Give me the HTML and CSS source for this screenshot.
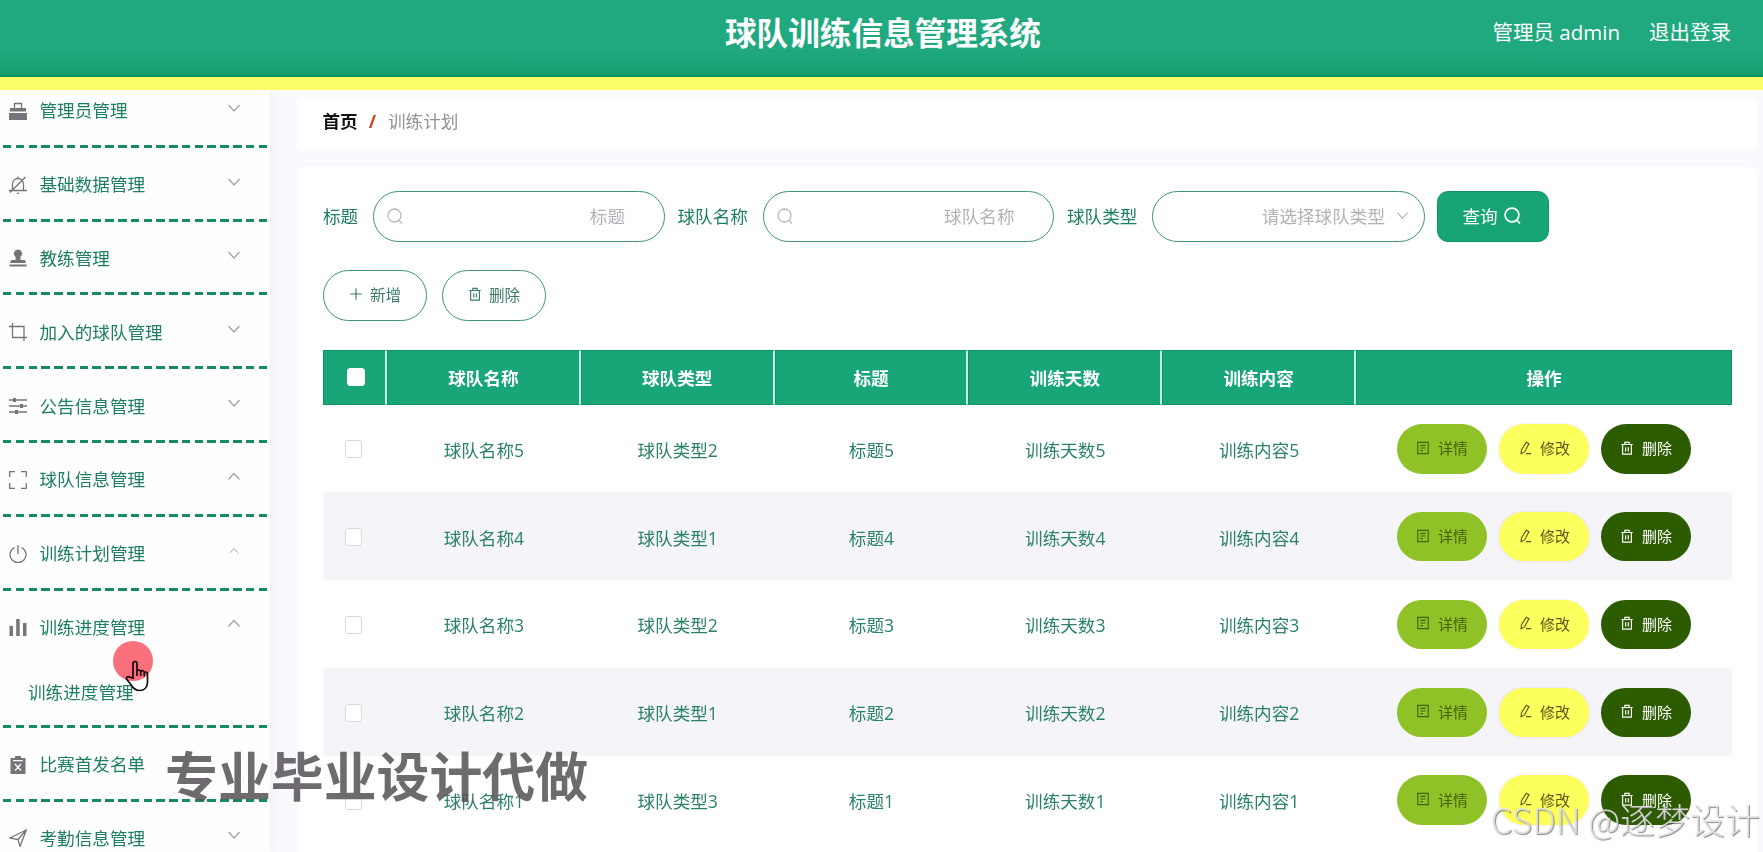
FILE: index.html
```html
<!DOCTYPE html>
<html lang="zh-CN">

<head>
  <meta charset="utf-8">
  <title>球队训练信息管理系统</title>
  <link rel="stylesheet" href="styles.css">
</head>

<body>
  <!-- icons -->
  <svg class="sprite">
    <symbol id="i-down" viewBox="0 0 14 14"><path d="M1.5 4l5.5 6 5.5-6" /></symbol>
    <symbol id="i-up" viewBox="0 0 14 14"><path d="M1.5 9.500l5.500-6 5.500 6" /></symbol>
    <symbol id="i-search" viewBox="0 0 16 16"><circle cx="7.500" cy="7.500" r="6.500" /><path d="M11.500 12l3.500 3.500" /></symbol>
    <symbol id="i-plus" viewBox="0 0 16 16"><path d="M8 1.500v13M1.500 8h13" /></symbol>
    <symbol id="i-trash" viewBox="0 0 16 16"><path d="M1.500 4h13M3 4v11h10V4M5.500 4V1.500h5V4M6.500 7v5M9.500 7v5" /></symbol>
    <symbol id="i-doc" viewBox="0 0 16 16"><path d="M2 1.500h12v13H2zM5 5h6M5 8h6M5 11h3" /></symbol>
    <symbol id="i-edit" viewBox="0 0 16 16"><path d="M9.500 1.500l3 1.500-5 9.500-4 2 .5-4.500zM9 14.500h6" /></symbol>
  </svg>

  <header class="header">
    <h1>球队训练信息管理系统</h1>
    <div class="user">
      <span>管理员 admin</span>
      <a>退出登录</a>
    </div>
  </header>

  <div class="container">
    <aside class="sidebar">
      <ul class="menu">
        <li>
          <div class="menu-title">
            <svg class="icon" viewBox="0 0 18 18"><path class="fill" d="M0 11h18v7H0zM1 6h16v3.500H1z" /><path d="M5.500 6V1.500h7V6" /></svg>
            <span>管理员管理</span><svg class="arrow"><use href="#i-down" /></svg>
          </div>
        </li>
        <li>
          <div class="menu-title">
            <svg class="icon" viewBox="0 0 18 18"><path d="M3.500 14.500V8a5.500 5.500 0 0 1 11 0v6.500M0 14.500h18M9 .5v2M8 17.500h2M1 16.500L16.500 1" /></svg>
            <span>基础数据管理</span><svg class="arrow"><use href="#i-down" /></svg>
          </div>
        </li>
        <li>
          <div class="menu-title">
            <svg class="icon" viewBox="0 0 18 18"><path class="fill" d="M9 .5a4 4 0 0 1 2.500 7.200V11H16l1 3H1l1-3h4.500V7.700A4 4 0 0 1 9 .5zM.5 15.500h17V17.500H.5z" /></svg>
            <span>教练管理</span><svg class="arrow"><use href="#i-down" /></svg>
          </div>
        </li>
        <li>
          <div class="menu-title">
            <svg class="icon" viewBox="0 0 18 18"><path d="M0 3.500h15V18M3.500 0v14.500H18" /></svg>
            <span>加入的球队管理</span><svg class="arrow"><use href="#i-down" /></svg>
          </div>
        </li>
        <li>
          <div class="menu-title">
            <svg class="icon" viewBox="0 0 18 18"><path d="M0 3h18M0 9h18M0 15h18" /><path class="fill" d="M4 1h3v4H4zM11 7h3v4h-3zM6 13h3v4H6z" /></svg>
            <span>公告信息管理</span><svg class="arrow"><use href="#i-down" /></svg>
          </div>
        </li>
        <li>
          <div class="menu-title">
            <svg class="icon" viewBox="0 0 18 18"><path d="M.7 6V.7H6M12 .7h5.300V6M17.300 12v5.300H12M6 17.300H.7V12" /></svg>
            <span>球队信息管理</span><svg class="arrow"><use href="#i-up" /></svg>
          </div>
        </li>
        <li>
          <div class="menu-title">
            <svg class="icon" viewBox="0 0 18 18"><path d="M5.500 2.500a8 8 0 1 0 7 0M9 0v9" /></svg>
            <span>训练计划管理</span><svg class="arrow small"><use href="#i-up" /></svg>
          </div>
        </li>
        <li>
          <div class="menu-title">
            <svg class="icon" viewBox="0 0 18 18"><path class="fill" d="M.5 8H4v10H.5zM7.200 1h3.500v17H7.200zM14 5h3.500v13H14z" /></svg>
            <span>训练进度管理</span><svg class="arrow"><use href="#i-up" /></svg>
          </div>
          <div class="submenu">训练进度管理</div>
        </li>
        <li>
          <div class="menu-title">
            <svg class="icon" viewBox="0 0 18 18"><path class="fill" d="M1.500 2h15v16h-15zM6 0h6v3H6z" /><path class="white" d="M4 4.700h10M6 8l6 6.500M12 8l-6 6.500" /></svg>
            <span>比赛首发名单</span>
          </div>
        </li>
        <li>
          <div class="menu-title">
            <svg class="icon" viewBox="0 0 18 18"><path d="M17.300 1L.8 9l8.200 1.500 2 7z M17.300 1L9 10.500" /></svg>
            <span>考勤信息管理</span><svg class="arrow"><use href="#i-down" /></svg>
          </div>
        </li>
      </ul>
    </aside>

    <main class="main">
      <div class="breadcrumb"><b>首页</b><i>/</i><span>训练计划</span></div>

      <div class="content">
        <form class="search">
          <label for="title">标题</label>
          <div class="field">
            <svg><use href="#i-search" /></svg>
            <input type="text" id="title" placeholder="标题">
          </div>
          <label for="team">球队名称</label>
          <div class="field">
            <svg><use href="#i-search" /></svg>
            <input type="text" id="team" placeholder="球队名称">
          </div>
          <label for="type">球队类型</label>
          <div class="field select">
            <input type="text" id="type" placeholder="请选择球队类型" readonly>
            <svg><use href="#i-down" /></svg>
          </div>
          <button type="button" class="query">查询<svg><use href="#i-search" /></svg></button>
        </form>

        <div class="actions">
          <button type="button"><svg><use href="#i-plus" /></svg>新增</button>
          <button type="button"><svg><use href="#i-trash" /></svg>删除</button>
        </div>

        <table>
          <colgroup>
            <col class="c-check"><col><col><col><col><col><col class="c-oper">
          </colgroup>
          <thead>
            <tr>
              <th><input type="checkbox"></th>
              <th>球队名称</th>
              <th>球队类型</th>
              <th>标题</th>
              <th>训练天数</th>
              <th>训练内容</th>
              <th>操作</th>
            </tr>
          </thead>
          <tbody>
            <tr>
              <td><input type="checkbox"></td>
              <td>球队名称5</td><td>球队类型2</td><td>标题5</td><td>训练天数5</td><td>训练内容5</td>
              <td>
                <div class="oper">
                  <button class="detail"><svg><use href="#i-doc" /></svg>详情</button>
                  <button class="edit"><svg><use href="#i-edit" /></svg>修改</button>
                  <button class="del"><svg><use href="#i-trash" /></svg>删除</button>
                </div>
              </td>
            </tr>
            <tr>
              <td><input type="checkbox"></td>
              <td>球队名称4</td><td>球队类型1</td><td>标题4</td><td>训练天数4</td><td>训练内容4</td>
              <td>
                <div class="oper">
                  <button class="detail"><svg><use href="#i-doc" /></svg>详情</button>
                  <button class="edit"><svg><use href="#i-edit" /></svg>修改</button>
                  <button class="del"><svg><use href="#i-trash" /></svg>删除</button>
                </div>
              </td>
            </tr>
            <tr>
              <td><input type="checkbox"></td>
              <td>球队名称3</td><td>球队类型2</td><td>标题3</td><td>训练天数3</td><td>训练内容3</td>
              <td>
                <div class="oper">
                  <button class="detail"><svg><use href="#i-doc" /></svg>详情</button>
                  <button class="edit"><svg><use href="#i-edit" /></svg>修改</button>
                  <button class="del"><svg><use href="#i-trash" /></svg>删除</button>
                </div>
              </td>
            </tr>
            <tr>
              <td><input type="checkbox"></td>
              <td>球队名称2</td><td>球队类型1</td><td>标题2</td><td>训练天数2</td><td>训练内容2</td>
              <td>
                <div class="oper">
                  <button class="detail"><svg><use href="#i-doc" /></svg>详情</button>
                  <button class="edit"><svg><use href="#i-edit" /></svg>修改</button>
                  <button class="del"><svg><use href="#i-trash" /></svg>删除</button>
                </div>
              </td>
            </tr>
            <tr>
              <td><input type="checkbox"></td>
              <td>球队名称1</td><td>球队类型3</td><td>标题1</td><td>训练天数1</td><td>训练内容1</td>
              <td>
                <div class="oper">
                  <button class="detail"><svg><use href="#i-doc" /></svg>详情</button>
                  <button class="edit"><svg><use href="#i-edit" /></svg>修改</button>
                  <button class="del"><svg><use href="#i-trash" /></svg>删除</button>
                </div>
              </td>
            </tr>
          </tbody>
        </table>
      </div>
    </main>
  </div>

  <!-- overlays -->
  <svg class="hand" viewBox="0 0 24 32">
    <path class="palm" d="M8 18V3.500a2 2 0 0 1 4 0V11a2 2 0 0 1 3.700.5 2 2 0 0 1 3.600 1 2 2 0 0 1 3.200 1.500v8c0 5-3 8.500-8 8.500-5 0-7-3-9-6.500L1.500 19c-.5-2 1.500-3 3-2z" />
    <path d="M12 11v5M15.700 12v4M19.300 13v3.500" />
  </svg>
  <div class="click-dot"></div>
  <div class="mark">专业毕业设计代做</div>
  <div class="csdn">CSDN @逐梦设计</div>
</body>

</html>
```
FILE: styles.css
```css
* {
  box-sizing: border-box;
}

body {
  margin: 0;
  height: 852px;
  overflow: hidden;
  position: relative;
  font-family: "Open Sans", "Noto Sans CJK SC", sans-serif;
  font-size: 17.6px;
  color: #1c7f5f;
  background: #faf9fd;
}

svg {
  fill: none;
  stroke: currentColor;
  stroke-width: 1.3;
  flex: none;
}

.sprite {
  display: none;
}

button,
input {
  font-family: inherit;
}

/* header */
.header {
  position: relative;
  z-index: 2;
  height: 90px;
  padding-bottom: 11px;
  display: flex;
  align-items: center;
  justify-content: center;
  color: #fff;
  background: linear-gradient(#20a97f 0, #20a97f 50px, #159e70 74px, #0c8c58 77px);
  border-bottom: 13px solid #fdff68;
}

.header h1 {
  margin: 0 0 0 3px;
  font-size: 31.6px;
  line-height: 40px;
}

.user {
  position: absolute;
  right: 32px;
  top: 17px;
  display: flex;
  gap: 29px;
  font-size: 20.5px;
  line-height: 30px;
}

.container {
  display: flex;
}

/* sidebar */
.sidebar {
  width: 270px;
  height: 762px;
  background: #fefefe;
  box-shadow: 0 0 12px rgba(60, 40, 120, 0.05);
}

.menu {
  list-style: none;
  margin: -16px 0 0;
  padding: 0 3px;
}

.menu li {
  padding-bottom: 3px;
  background: repeating-linear-gradient(90deg, #178a62 0, #178a62 8.500px, transparent 8.500px, transparent 12.780px) left bottom / 100% 3px no-repeat;
}

.menu-title {
  display: flex;
  align-items: center;
  height: 70.8px;
  padding: 1px 26px 0 6px;
}

.menu-title span {
  flex: 1;
  margin-left: 12.5px;
}

.icon {
  width: 18px;
  height: 18px;
  margin-top: 2px;
  color: #77737a;
}

.icon .fill {
  fill: currentColor;
  stroke: none;
}

.icon .white {
  stroke: #fff;
}

.arrow {
  width: 14px;
  height: 14px;
  margin-bottom: 4px;
  color: #a3a0a6;
}

.arrow.small {
  width: 10px;
  margin-right: 2px;
}

.submenu {
  height: 63.4px;
  padding-left: 25px;
  line-height: 62px;
}

/* main */
.main {
  flex: 1;
  padding: 8px 6px 0 28px;
}

.breadcrumb {
  display: flex;
  align-items: center;
  height: 52px;
  padding: 0 25px 7px 24.5px;
  background: #fff;
  border-radius: 4px;
}

.breadcrumb b {
  color: #111;
}

.breadcrumb i {
  margin: 0 12px 0 11px;
  font-weight: bold;
  font-style: normal;
  color: #c8401c;
}

.breadcrumb span {
  color: #929098;
}

.content {
  height: 700px;
  margin-top: 17px;
  padding: 24px 25px 0;
  background: #fff;
  border-radius: 6px;
}

.search {
  display: flex;
  align-items: center;
}

.search label {
  width: 35px;
  margin-right: 15px;
  padding-bottom: 2px;
  white-space: nowrap;
}

.search label + .field + label {
  width: 71px;
  margin-left: 13px;
  margin-right: 14px;
}

.field {
  display: flex;
  align-items: center;
  width: 291.5px;
  height: 51px;
  padding: 0 38.5px 2px 13px;
  border: 1.500px solid #3f9080;
  border-radius: 26px;
}

.field svg {
  width: 16px;
  height: 16px;
  color: #b9b6be;
}

.field input {
  flex: 1;
  min-width: 0;
  padding: 0;
  border: none;
  outline: none;
  background: none;
  font-size: 17.6px;
  text-align: right;
}

.field input::placeholder {
  color: #b3b1b8;
}

.field.select {
  width: 273px;
  padding-right: 15px;
}

.field.select svg {
  width: 13px;
  height: 13px;
  margin-left: 11px;
}

.query {
  display: flex;
  align-items: center;
  justify-content: center;
  gap: 6px;
  width: 112px;
  height: 51px;
  margin-left: 12px;
  padding: 0 3px 2px 0;
  border: 1px solid #0f9465;
  border-radius: 11px;
  color: #fff;
  font-size: 17.6px;
  background: #17a576;
}

.query svg {
  width: 17px;
  height: 17px;
  stroke-width: 1.600;
}

.actions {
  display: flex;
  gap: 15px;
  margin: 28px 0 28.5px;
}

.actions button {
  display: flex;
  align-items: center;
  justify-content: center;
  gap: 7px;
  width: 104px;
  height: 51px;
  padding: 0 0 3px;
  border: 1.500px solid #3f9080;
  border-radius: 26px;
  background: #fff;
  font-size: 15.600px;
  color: #3b7c68;
}

.actions svg {
  width: 14px;
  height: 14px;
}

/* table */
table {
  width: 1409px;
  table-layout: fixed;
  border-collapse: separate;
  border-spacing: 0;
}

.c-check {
  width: 64px;
}

.c-oper {
  width: 376px;
}

th,
td {
  padding: 0;
  text-align: center;
}

th {
  height: 55px;
  color: #fff;
  background: #18a577;
  border: 1px solid #0f9465;
  border-right: 2px solid #c9f0e2;
}

th:last-child {
  border-right: 1px solid #0f9465;
}

td {
  height: 87.8px;
  padding-top: 2px;
  color: #2b8267;
}

tbody tr:nth-child(even) {
  background: #f5f4f9;
}

input[type="checkbox"] {
  appearance: none;
  display: block;
  width: 17px;
  height: 18px;
  margin: 0 auto;
  background: #fff;
  border: 1px solid #dcd8e2;
  border-radius: 3px;
  position: relative;
  left: -2px;
}

th input[type="checkbox"] {
  width: 18px;
  left: 1px;
  border-color: #fff;
}

.oper {
  display: flex;
  justify-content: center;
  gap: 12.500px;
  padding-bottom: 1px;
}

.oper button {
  display: flex;
  align-items: center;
  justify-content: center;
  gap: 8px;
  width: 89.500px;
  height: 49.500px;
  padding: 0 0 2px;
  border: none;
  border-radius: 25px;
  font-size: 15px;
}

.oper svg {
  width: 14px;
  height: 14px;
}

.oper .detail {
  color: #3f6410;
  background: #8fc226;
}

.oper .edit {
  color: #5c5a18;
  background: #fdff5c;
  box-shadow: 0 0 3px rgba(120, 60, 160, 0.15);
}

.oper .del {
  color: #fff;
  background: #2d5c00;
}

/* overlays */
.click-dot {
  position: absolute;
  left: 113px;
  top: 641px;
  width: 40px;
  height: 40px;
  border-radius: 50%;
  background: #fb6f7c;
  mix-blend-mode: multiply;
}

.hand {
  position: absolute;
  left: 125px;
  top: 660px;
  width: 24px;
  height: 32px;
  color: #1a1014;
  stroke-width: 1.700;
}

.hand .palm {
  fill: #fff;
}

.mark {
  position: absolute;
  left: 165px;
  top: 738px;
  font-size: 52.900px;
  line-height: 76px;
  font-weight: bold;
  white-space: nowrap;
  color: rgba(85, 81, 86, 0.85);
}

.csdn {
  position: absolute;
  right: 3px;
  top: 796px;
  font-family: "Noto Sans CJK SC", sans-serif;
  font-size: 35px;
  line-height: 46px;
  font-weight: 300;
  white-space: nowrap;
  color: rgba(225, 225, 225, 0.9);
  text-shadow: 1px 1px 1px rgba(90, 90, 90, 0.7);
}
```
